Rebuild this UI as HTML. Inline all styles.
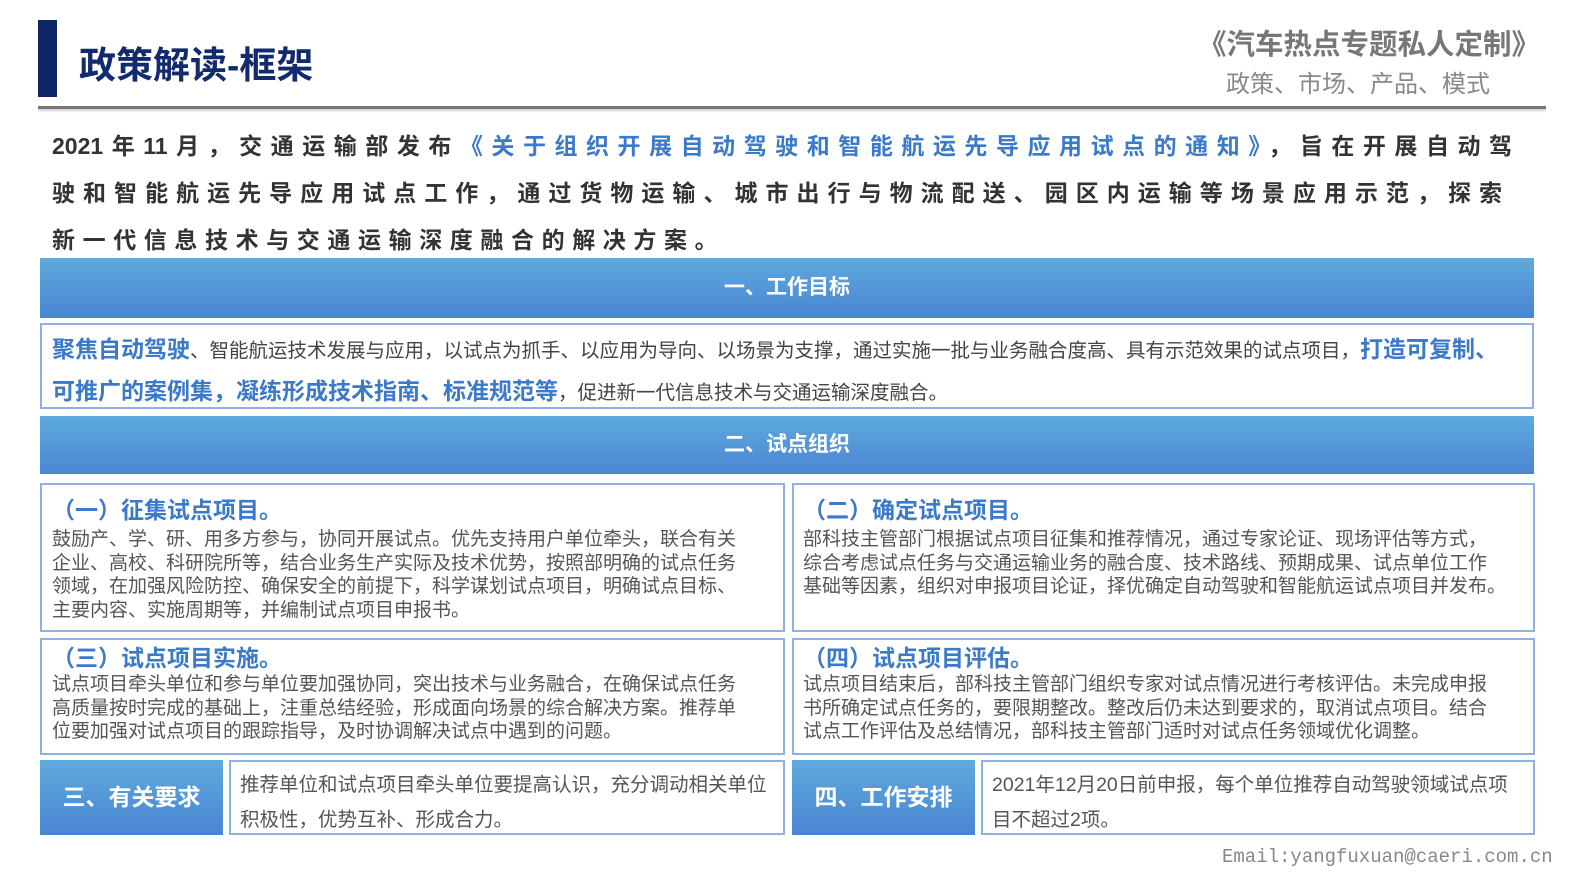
<!DOCTYPE html>
<html><head><meta charset="utf-8">
<style>
*{margin:0;padding:0;box-sizing:border-box}
body{width:1587px;height:894px;background:#fff;position:relative;overflow:hidden;font-family:"Liberation Sans","Noto Sans CJK SC",sans-serif;color:#444}
.a{position:absolute;white-space:nowrap}
.bar{position:absolute;left:40px;width:1494px;background:linear-gradient(#5eaadd,#4a85d2);color:#fff;font-weight:bold;font-size:21px;text-align:center}
.box{position:absolute;border:2px solid #8fb0e0;background:#fff}
.h{color:#3b79c9;font-weight:bold;font-size:23px;line-height:28px}
.b{font-size:19px;line-height:23.5px;color:#555}
.lbl{position:absolute;background:linear-gradient(#5eaadd,#4a85d2);color:#fff;font-weight:bold;font-size:23px;text-align:center}
.j{position:absolute;left:52px;width:1460px;text-align:justify;text-align-last:justify;font-size:23px;font-weight:bold;color:#333;white-space:nowrap}
</style></head><body>
<div class="a" style="left:38px;top:20px;width:19px;height:77px;background:#0e2766"></div>
<div class="a" style="left:79px;top:35px;font-size:37px;font-weight:bold;color:#112b6e">政策解读-框架</div>
<div class="a" style="left:1198px;top:22px;font-size:28.5px;font-weight:bold;color:#777">《汽车热点专题私人定制》</div>
<div class="a" style="left:1226px;top:64px;font-size:24px;color:#888">政策、市场、产品、模式</div>
<div class="a" style="left:38px;top:106px;width:1508px;height:3px;background:#777;box-shadow:0 2px 2px #ccc"></div>

<div class="j" style="top:127px">2021年11月，交通运输部发布<span style="color:#3b79c9">《关于组织开展自动驾驶和智能航运先导应用试点的通知》</span>，旨在开展自动驾</div>
<div class="j" style="top:174px;width:1450px">驶和智能航运先导应用试点工作，通过货物运输、城市出行与物流配送、园区内运输等场景应用示范，探索</div>
<div class="a" style="left:52px;top:221px;font-size:23px;font-weight:bold;color:#333;letter-spacing:7.6px">新一代信息技术与交通运输深度融合的解决方案。</div>

<div class="bar" style="top:258px;height:60px;line-height:60px">一、工作目标</div>
<div class="box" style="left:40px;top:323px;width:1494px;height:86px"></div>
<div class="a" style="left:52px;top:334px;font-size:19.5px;color:#444"><span class="h">聚焦自动驾驶</span>、智能航运技术发展与应用，以试点为抓手、以应用为导向、以场景为支撑，通过实施一批与业务融合度高、具有示范效果的试点项目，<span class="h">打造可复制、</span></div>
<div class="a" style="left:52px;top:376px;font-size:19.5px;color:#444"><span class="h">可推广的案例集，凝练形成技术指南、标准规范等</span>，促进新一代信息技术与交通运输深度融合。</div>

<div class="bar" style="top:416px;height:58px;line-height:58px">二、试点组织</div>

<div class="box" style="left:40px;top:483px;width:745px;height:149px"></div>
<div class="a h" style="left:52px;top:496px">（一）征集试点项目。</div>
<div class="a b" style="left:52px;top:528px">鼓励产、学、研、用多方参与，协同开展试点。优先支持用户单位牵头，联合有关<br>企业、高校、科研院所等，结合业务生产实际及技术优势，按照部明确的试点任务<br>领域，在加强风险防控、确保安全的前提下，科学谋划试点项目，明确试点目标、<br>主要内容、实施周期等，并编制试点项目申报书。</div>

<div class="box" style="left:792px;top:483px;width:743px;height:149px"></div>
<div class="a h" style="left:803px;top:496px">（二）确定试点项目。</div>
<div class="a b" style="left:803px;top:528px">部科技主管部门根据试点项目征集和推荐情况，通过专家论证、现场评估等方式，<br>综合考虑试点任务与交通运输业务的融合度、技术路线、预期成果、试点单位工作<br>基础等因素，组织对申报项目论证，择优确定自动驾驶和智能航运试点项目并发布。</div>

<div class="box" style="left:40px;top:638px;width:745px;height:117px"></div>
<div class="a h" style="left:52px;top:644px">（三）试点项目实施。</div>
<div class="a b" style="left:52px;top:673px">试点项目牵头单位和参与单位要加强协同，突出技术与业务融合，在确保试点任务<br>高质量按时完成的基础上，注重总结经验，形成面向场景的综合解决方案。推荐单<br>位要加强对试点项目的跟踪指导，及时协调解决试点中遇到的问题。</div>

<div class="box" style="left:792px;top:638px;width:743px;height:117px"></div>
<div class="a h" style="left:803px;top:644px">（四）试点项目评估。</div>
<div class="a b" style="left:803px;top:673px">试点项目结束后，部科技主管部门组织专家对试点情况进行考核评估。未完成申报<br>书所确定试点任务的，要限期整改。整改后仍未达到要求的，取消试点项目。结合<br>试点工作评估及总结情况，部科技主管部门适时对试点任务领域优化调整。</div>

<div class="lbl" style="left:40px;top:760px;width:183px;height:75px;line-height:75px">三、有关要求</div>
<div class="box" style="left:229px;top:760px;width:556px;height:75px"></div>
<div class="a b" style="left:240px;top:768px;line-height:35px;font-size:19.5px">推荐单位和试点项目牵头单位要提高认识，充分调动相关单位<br>积极性，优势互补、形成合力。</div>

<div class="lbl" style="left:792px;top:760px;width:183px;height:75px;line-height:75px">四、工作安排</div>
<div class="box" style="left:981px;top:760px;width:554px;height:75px"></div>
<div class="a b" style="left:992px;top:768px;line-height:35px;font-size:19.5px">2021年12月20日前申报，每个单位推荐自动驾驶领域试点项<br>目不超过2项。</div>

<div class="a" style="left:1222px;top:846px;font-family:'Liberation Mono',monospace;font-size:19px;color:#888">Email:yangfuxuan@caeri.com.cn</div>
</body></html>
